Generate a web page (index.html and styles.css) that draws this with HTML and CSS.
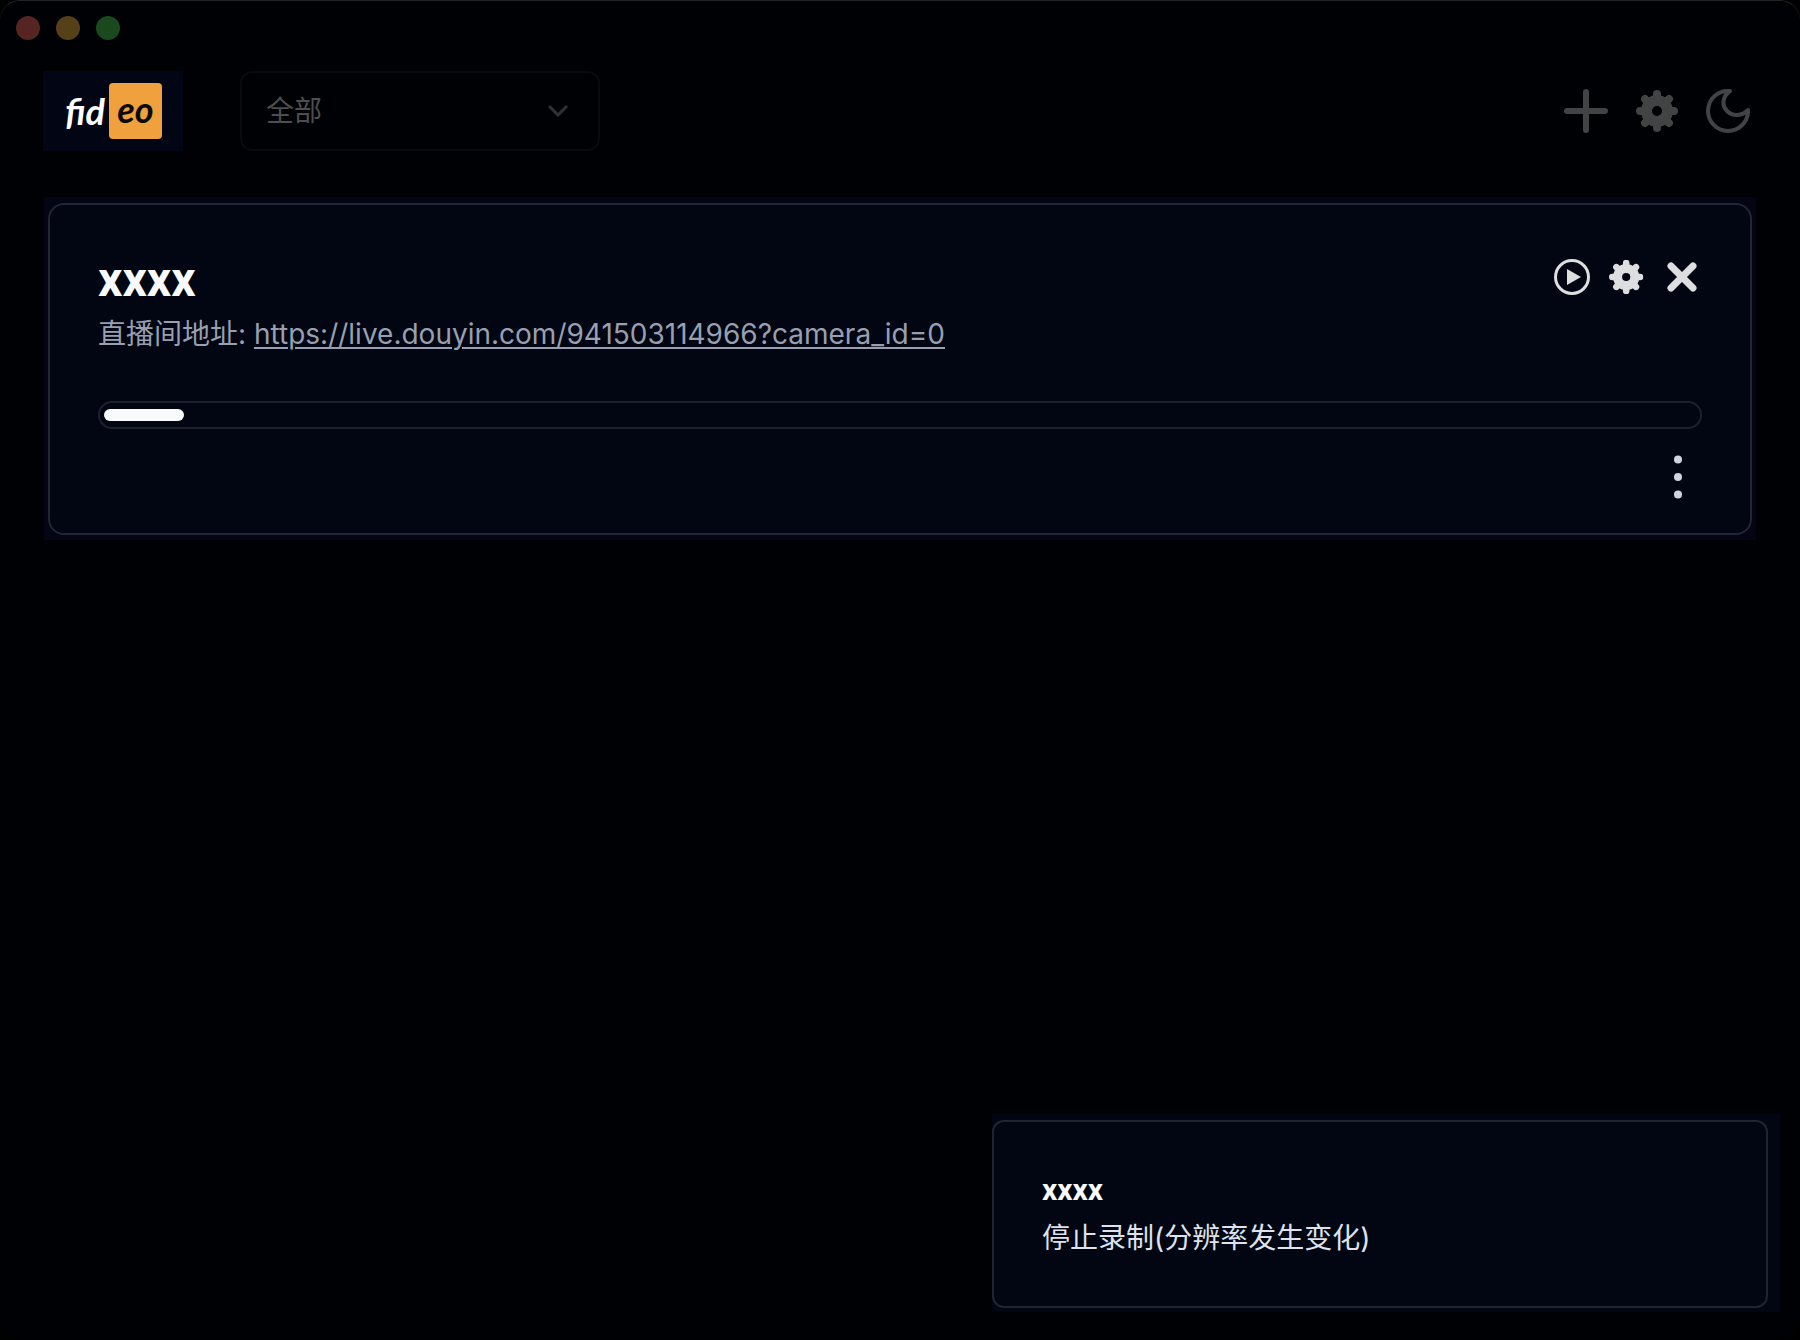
FILE: index.html
```html
<!DOCTYPE html>
<html lang="zh-CN">
<head>
    <meta charset="UTF-8">
    <title>Fideo</title>
    <link rel="stylesheet" href="styles.css">
</head>
<body>
    <svg class="sprite" aria-hidden="true">
        <symbol id="gear" viewBox="0 0 42 42">
            <circle cx="21" cy="21" r="10.500" fill="none" stroke="currentColor" stroke-width="11"/>
            <path d="M21 7V4M21 35v3M7 21H4M35 21h3M11 11L9 9M31 11L33 9M11 31L9 33M31 31L33 33" fill="none" stroke="currentColor" stroke-width="8" stroke-linecap="round"/>
        </symbol>
    </svg>

    <div class="window">
        <div class="titlebar">
            <button class="dot dot-close" aria-label="关闭"></button>
            <button class="dot dot-min" aria-label="最小化"></button>
            <button class="dot dot-max" aria-label="最大化"></button>
        </div>

        <header class="header">
            <div class="logo"><span class="logo-fid">fid</span><span class="logo-eo">eo</span></div>
            <div class="filter">
                <select class="filter-select" aria-label="筛选">
                    <option>全部</option>
                </select>
                <svg class="filter-arrow" viewBox="0 0 20 12" aria-hidden="true">
                    <path d="M1 1l9 9 9-9" fill="none" stroke="currentColor" stroke-width="3"/>
                </svg>
            </div>
            <div class="tools">
                <button class="icon-btn tool" aria-label="添加">
                    <svg viewBox="0 0 44 44"><path d="M22 3v38M3 22h38" stroke="currentColor" stroke-width="6" stroke-linecap="round"/></svg>
                </button>
                <button class="icon-btn tool" aria-label="设置">
                    <svg viewBox="-1 -1 44 44"><use href="#gear" width="42" height="42"/></svg>
                </button>
                <button class="icon-btn tool" aria-label="主题">
                    <svg viewBox="0 0 44 44"><path d="M24 2C17 7 15 16 21 22C27 28 36 27 42 21A20 20 0 1 1 24 2Z" fill="none" stroke="currentColor" stroke-width="4" stroke-linejoin="round"/></svg>
                </button>
            </div>
        </header>

        <main class="stage">
            <section class="card">
                <div class="card-top">
                    <div>
                        <h2 class="card-title">xxxx</h2>
                        <p class="card-url">直播间地址: <a href="https://live.douyin.com/941503114966?camera_id=0">https://live.douyin.com/941503114966?camera_id=0</a></p>
                    </div>
                    <div class="card-actions">
                        <button class="icon-btn" aria-label="开始">
                            <svg viewBox="0 0 36 36"><circle cx="18" cy="18" r="16.500" fill="none" stroke="currentColor" stroke-width="3"/><path d="M13 10v16l14-8z" fill="currentColor"/></svg>
                        </button>
                        <button class="icon-btn" aria-label="设置">
                            <svg viewBox="0 -1 44 44"><use href="#gear" width="42" height="42"/></svg>
                        </button>
                        <button class="icon-btn" aria-label="删除">
                            <svg viewBox="0 0 36 36"><path d="M7 7l22 22M29 7L7 29" stroke="currentColor" stroke-width="7" stroke-linecap="round"/></svg>
                        </button>
                    </div>
                </div>
                <div class="progress" role="progressbar" aria-valuenow="5" aria-valuemin="0" aria-valuemax="100" aria-label="进度">
                    <div class="progress-bar" style="width: 5%"></div>
                </div>
                <div class="card-bottom">
                    <button class="more" aria-label="更多">
                        <svg viewBox="0 0 48 48" fill="currentColor"><circle cx="24" cy="6.500" r="4"/><circle cx="24" cy="24" r="4"/><circle cx="24" cy="41.500" r="4"/></svg>
                    </button>
                </div>
            </section>
        </main>

        <div class="toast-area">
            <div class="toast" role="status">
                <div class="toast-title">xxxx</div>
                <div class="toast-text">停止录制(分辨率发生变化)</div>
            </div>
        </div>
    </div>
</body>
</html>
```

FILE: styles.css
```css
* {
    box-sizing: border-box;
}

body {
    margin: 0;
    background: #000;
    font-family: Inter, "Noto Sans CJK SC", sans-serif;
    font-size: 28px;
    line-height: 40px;
}

h2, p {
    margin: 0;
}

button {
    padding: 0;
    border: 0;
    background: none;
    color: inherit;
}

svg {
    display: block;
}

.sprite {
    position: absolute;
    width: 0;
    height: 0;
}

.window {
    min-height: 100vh;
    background: #000104;
    border-top: 1px solid #242424;
    border-radius: 20px;
}

/* Title bar */
.titlebar {
    display: flex;
    align-items: center;
    gap: 16px;
    height: 54px;
    padding: 0 16px;
}

.dot {
    width: 24px;
    height: 24px;
    border-radius: 50%;
}

.dot-close {
    background: #562523;
}

.dot-min {
    background: #564019;
}

.dot-max {
    background: #19491c;
}

/* Header */
.header {
    display: flex;
    align-items: center;
    padding: 16px 50px 0 43px;
}

.logo {
    display: flex;
    align-items: center;
    justify-content: flex-end;
    width: 140px;
    height: 80px;
    padding-right: 21px;
    background: #020513;
    font-family: Lato, sans-serif;
    font-size: 36px;
    font-style: italic;
    font-weight: bold;
}

.logo-fid {
    margin-right: 4px;
    color: #fff;
}

.logo-eo {
    width: 53px;
    padding: 6px 0 10px;
    border-radius: 4px;
    background: #f0a03c;
    color: #0c0a08;
    text-align: center;
}

.filter {
    position: relative;
    width: 360px;
    margin-left: 57px;
    color: #4e4e50;
}

.filter-select {
    display: block;
    width: 100%;
    height: 80px;
    padding: 0 24px;
    appearance: none;
    border: 2px solid #090a0e;
    border-radius: 12px;
    background: transparent;
    color: inherit;
    font: inherit;
}

.filter-arrow {
    position: absolute;
    top: 34px;
    right: 32px;
    width: 20px;
    height: 12px;
    color: #303133;
    pointer-events: none;
}

.tools {
    display: flex;
    gap: 27px;
    margin-left: auto;
    color: #424344;
}

.icon-btn {
    width: 36px;
    height: 36px;
}

.tool {
    width: 44px;
    height: 44px;
}

/* Room card */
.stage {
    margin: 46px 44px 0;
    padding: 6px 4px 5px;
    background: #030515;
}

.card {
    padding: 48px 48px 32px;
    border: 2px solid #232532;
    border-radius: 16px;
    background: #010612;
}

.card-top {
    display: flex;
    justify-content: space-between;
}

.card-title {
    margin-bottom: 8px;
    color: #f8fafc;
    font-family: Roboto, sans-serif;
    font-size: 48px;
    line-height: 53px;
}

.card-url {
    color: #979fb0;
}

.card-url a {
    color: inherit;
    text-decoration-thickness: 2px;
    text-underline-offset: 3px;
}

.card-actions {
    display: flex;
    gap: 19px;
    padding: 6px 2px 0 0;
    color: #dddedf;
}

.progress {
    height: 28px;
    margin-top: 47px;
    padding: 6px 4px;
    border: 2px solid #1d202c;
    border-radius: 14px;
}

.progress-bar {
    height: 12px;
    border-radius: 6px;
    background: #f8fafc;
}

.card-bottom {
    display: flex;
    justify-content: flex-end;
    margin-top: 24px;
    color: #d1d3df;
}

.more {
    width: 48px;
    height: 48px;
}

/* Toast */
.toast-area {
    position: fixed;
    right: 20px;
    bottom: 28px;
    width: 788px;
    padding: 6px 12px 4px 0;
    background: #020613;
}

.toast {
    display: flex;
    flex-direction: column;
    gap: 8px;
    padding: 48px;
    border: 2px solid #20242f;
    border-radius: 12px;
    background: #010612;
    color: #dfe2ec;
}

.toast-title {
    color: #f8fafc;
    font-family: Roboto, sans-serif;
    font-size: 30px;
    font-weight: bold;
}
```
